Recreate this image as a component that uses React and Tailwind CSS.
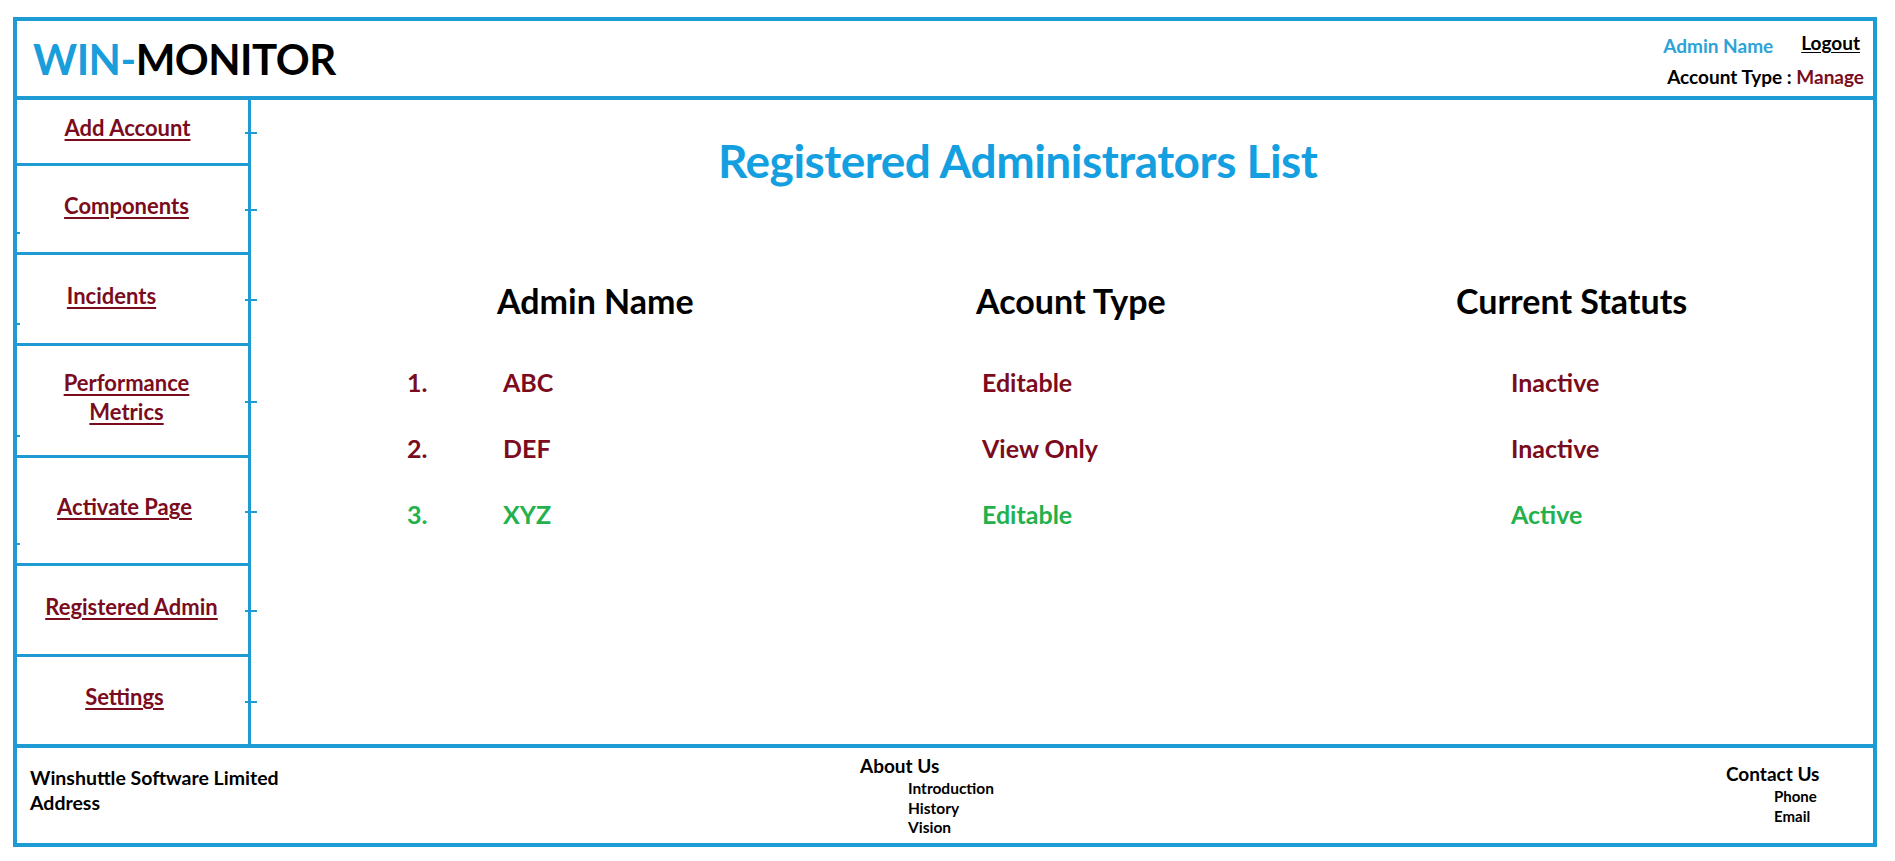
import React from "react";

const nav = [
  { label: ["Add Account"], h: "h-[66px]", shift: "pr-[10px]", left: false },
  { label: ["Components"], h: "h-[89px]", shift: "pr-[12px]", left: true },
  { label: ["Incidents"], h: "h-[91px]", shift: "pr-[42px]", left: true },
  { label: ["Performance", "Metrics"], h: "h-[112px]", shift: "pr-[12px]", left: true },
  { label: ["Activate Page"], h: "h-[108px]", shift: "pr-[16px]", left: true },
  { label: ["Registered Admin"], h: "h-[91px]", shift: "pr-[2px]", left: false },
  { label: ["Settings"], h: "h-[87px]", shift: "pr-[16px]", left: false },
];

const rows = [
  { n: "1.", name: "ABC", type: "Editable", status: "Inactive", c: "text-[#7b0c1d]" },
  { n: "2.", name: "DEF", type: "View Only", status: "Inactive", c: "text-[#7b0c1d]" },
  { n: "3.", name: "XYZ", type: "Editable", status: "Active", c: "text-[#22b14c]" },
];

export default function App() {
  return (
    <div className="w-[1895px] h-[861px] bg-white pl-[13px] pt-[17px] pr-[18px] pb-[14px] font-['Lato',sans-serif] font-bold">
      <div className="h-full border-4 border-[#1e9bd3] flex flex-col">
        {/* Header */}
        <div className="h-[79px] border-b-4 border-[#1e9bd3] flex justify-between shrink-0">
          <div className="pl-[16px] flex items-center text-[42px] leading-none tracking-[-0.5px]">
            <span className="text-[#1a9ddb]">WIN-</span>
            <span className="text-black">MONITOR</span>
          </div>
          <div className="pr-[9px] pt-[10px] flex flex-col items-end text-[19px] leading-[24px]">
            <div className="flex items-start pr-[4px]">
              <span className="text-[#2ba3d6] mt-[3px]">Admin Name</span>
              <span className="ml-[28px] text-black underline underline-offset-2">Logout</span>
            </div>
            <div className="mt-[7px]">
              <span className="text-black">Account Type : </span>
              <span className="text-[#7b0c1d]">Manage</span>
            </div>
          </div>
        </div>

        {/* Middle */}
        <div className="h-[644px] flex shrink-0">
          <div className="w-[234px] border-r-[3px] border-[#1e9bd3] flex flex-col shrink-0">
            {nav.map((it, i) => (
              <div
                key={i}
                className={`${it.h} relative flex flex-col items-center justify-center pb-[8px] ${it.shift} ${i < nav.length - 1 ? "border-b-[3px] border-[#1e9bd3]" : ""} text-[22px] leading-[29px] text-[#7b0c1d] underline underline-offset-[3px] decoration-[1.5px]`}
              >
                {it.label.map((l) => (
                  <span key={l}>{l}</span>
                ))}
                <span className="absolute right-[-9px] top-1/2 w-[12px] h-[2px] bg-[#1e9bd3]" />
                {it.left && (
                  <span className="absolute left-0 bottom-[18px] w-[3px] h-[2px] bg-[#1e9bd3]" />
                )}
              </div>
            ))}
          </div>

          <div className="flex-1 flex flex-col">
            <div className="mt-[33px] ml-[467px] text-[46px] leading-[55px] text-[#139fe0] tracking-[-0.5px]">
              Registered Administrators List
            </div>
            <div className="mt-[92px] pl-[246px] flex text-[34px] leading-[41px] text-black">
              <div className="w-[479px]">Admin Name</div>
              <div className="w-[480px]">Acount Type</div>
              <div>Current Statuts</div>
            </div>
            <div className="mt-[46px] pl-[156px] flex flex-col gap-[36px] text-[25px] leading-[30px]">
              {rows.map((r) => (
                <div key={r.n} className={`flex ${r.c}`}>
                  <div className="w-[96px]">{r.n}</div>
                  <div className="w-[479px]">{r.name}</div>
                  <div className="w-[529px]">{r.type}</div>
                  <div>{r.status}</div>
                </div>
              ))}
            </div>
          </div>
        </div>

        {/* Footer */}
        <div className="flex-1 border-t-4 border-[#1e9bd3] flex text-black">
          <div className="w-[843px] pl-[13px] pt-[17px] text-[19.5px] leading-[25px]">
            <div>Winshuttle Software Limited</div>
            <div>Address</div>
          </div>
          <div className="w-[866px] pt-[6px]">
            <div className="text-[19px] leading-[23px]">About Us</div>
            <div className="pl-[48px] pt-[2px] text-[15.5px] leading-[19.5px]">
              <div>Introduction</div>
              <div>History</div>
              <div>Vision</div>
            </div>
          </div>
          <div className="pt-[14px]">
            <div className="text-[19px] leading-[23px]">Contact Us</div>
            <div className="pl-[48px] pt-[2px] text-[15px] leading-[19.5px]">
              <div>Phone</div>
              <div>Email</div>
            </div>
          </div>
        </div>
      </div>
    </div>
  );
}
